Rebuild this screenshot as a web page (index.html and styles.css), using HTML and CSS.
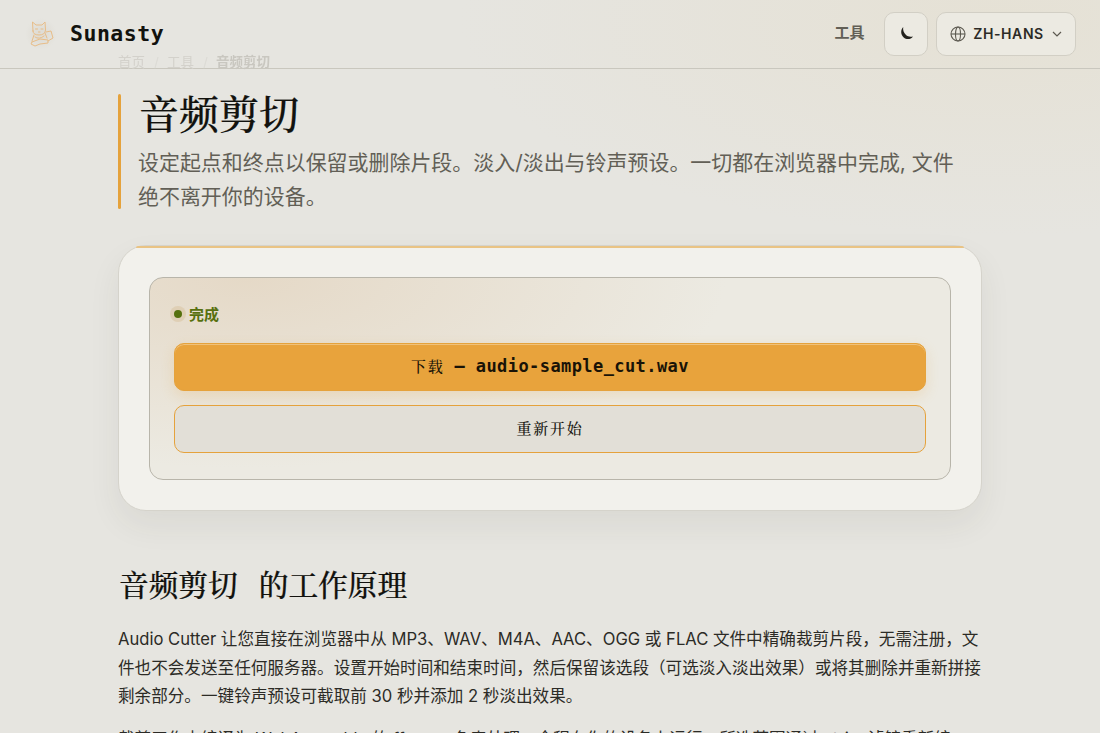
FILE: index.html
```
<!DOCTYPE html>
<html lang="zh-Hans">
<head>
<meta charset="utf-8">
<title>音频剪切 — Sunasty</title>
<link rel="stylesheet" href="styles.css">
</head>
<body>
<header class="site-header">
  <a class="brand">
    <svg class="brand-mark" viewBox="0 0 32 32" width="32" height="32" fill="none" stroke="#e8bd88" stroke-width="1" stroke-linejoin="round" stroke-linecap="round">
      <path d="M8 13 7.500 4 11 7H17L20 4 20.500 12Q20 17 14 17T8 13Z"/>
      <path d="M10.500 11h2M16 11h2M13.500 14h1.500M9 17 7 23M20 15l2 5M10 19q4 3 9-1M21 14l5-1 2 7-5 3M7 24l8-3 8 1v3l-8 1-5 2-4-2 1-2"/>
    </svg>
    <span class="brand-name">Sunasty</span>
  </a>
  <nav class="header-nav">
    <a class="nav-link">工具</a>
    <button class="pill theme" aria-label="主题">
      <svg viewBox="0 0 16 16" width="16" height="16"><path d="M5.200 1C2.400 3.800 2.600 8.800 5.700 11.400C8.600 13.900 12.800 13.400 15 10.400C12.600 11.200 9.800 10.800 7.800 8.800C5.600 6.700 4.800 3.900 5.200 1Z" fill="#22211c"/></svg>
    </button>
    <button class="pill lang">
      <svg viewBox="0 0 16 16" width="16" height="16" fill="none" stroke="#5c5950" stroke-width="1.1"><circle cx="8" cy="8" r="7"/><ellipse cx="8" cy="8" rx="2.500" ry="7"/><path d="M1 8h14"/></svg>
      <span>ZH-HANS</span>
      <svg class="chevron" viewBox="0 0 10 10" width="10" height="10" fill="none" stroke="#5c5950" stroke-width="1.200"><path d="M1 3l4 4 4-4"/></svg>
    </button>
  </nav>
</header>
<main class="page">
  <nav class="crumbs"><span>首页</span><span class="sep">/</span><span>工具</span><span class="sep">/</span><b>音频剪切</b></nav>
  <section class="hero">
    <h1>音频剪切</h1>
    <p>设定起点和终点以保留或删除片段。淡入/淡出与铃声预设。一切都在浏览器中完成, 文件<br>绝不离开你的设备。</p>
  </section>
  <section class="tool-card">
    <div class="result">
      <div class="status"><i class="dot"></i><span>完成</span></div>
      <button class="btn primary"><span class="cjk">下载</span><span class="file">— audio-sample_cut.wav</span></button>
      <button class="btn secondary"><span class="cjk">重新开始</span></button>
    </div>
  </section>
  <section class="article">
    <h2><span>音频剪切</span><span>的工作原理</span></h2>
    <p>Audio Cutter 让您直接在浏览器中从 MP3、WAV、M4A、AAC、OGG 或 FLAC 文件中精确裁剪片段，无需注册，文<br>件也不会发送至任何服务器。设置开始时间和结束时间，然后保留该选段（可选淡入淡出效果）或将其删除并重新拼接<br>剩余部分。一键铃声预设可截取前 30 秒并添加 2 秒淡出效果。</p>
    <p>裁剪工作由编译为 WebAssembly 的 ffmpeg 负责处理，全程在你的设备上运行。所选范围通过 atrim 滤镜重新编</p>
  </section>
</main>
</body>
</html>
```
FILE: styles.css
```
* { box-sizing: border-box; }
html, body { height: 100%; }
body {
  margin: 0;
  overflow: hidden;
  color: #2c2b26;
  font-family: Inter, "Noto Sans CJK SC", sans-serif;
  background:
    radial-gradient(ellipse 600px 240px at 1000px 20px, rgba(229, 224, 210, .8), transparent 90%),
    #e6e5e0;
}
button { font: inherit; color: inherit; padding: 0; }
.site-header {
  height: 69px;
  padding: 0 24px;
  display: flex;
  align-items: center;
  justify-content: space-between;
  border-bottom: 1px solid #c9c7be;
}
.brand { display: flex; align-items: center; gap: 13px; }
.brand-mark { margin-left: 1px; background: radial-gradient(circle, #dfddd6 20%, transparent 70%); }
.brand-name { font: bold 21.500px/1 "DejaVu Sans Mono", monospace; letter-spacing: .5px; color: #12120e; }
.header-nav { display: flex; align-items: center; }
.nav-link { font-size: 15px; line-height: 20px; padding-bottom: 2px; font-weight: 600; color: #625f56; margin-right: 19.500px; }
.pill {
  height: 44px;
  display: flex;
  align-items: center;
  justify-content: center;
  border: 1px solid #d2cfc5;
  border-radius: 10px;
  background: #eceae2;
}
.theme { width: 44px; margin-right: 8px; }
.lang { width: 140px; gap: 7px; font-size: 14px; font-weight: 600; letter-spacing: .6px; color: #2c2b26; }
.lang span { padding-bottom: 1px; }
.chevron { margin-left: 1px; }
.page { width: 864px; margin: 0 auto; }
.crumbs {
  height: 0;
  display: flex;
  gap: 9px;
  font-size: 13.500px;
  line-height: 14px;
  color: #d3d1cb;
  filter: blur(.7px);
}
.crumbs > * { margin-top: -14px; }
.crumbs .sep { width: 4px; opacity: .5; }
.crumbs b { color: #c9c7c0; }
.hero {
  position: relative;
  height: 115px;
  margin-top: 25px;
  padding-left: 20px;
}
.hero::before {
  content: "";
  position: absolute;
  inset: 0 auto 0 0;
  width: 3px;
  border-radius: 2px;
  background: #e5a23c;
}
h1, h2 { margin: 0; font-family: "Noto Serif CJK SC", "Noto Sans CJK SC", serif; font-weight: 500; color: #12120e; -webkit-text-stroke: .2px #12120e; }
h1 { height: 40px; font-size: 40px; line-height: 35px; padding-left: 1px; }
.hero p { margin: 12px 0 0; font-size: 20.960px; line-height: 34px; color: #625f56; white-space: nowrap; }
.tool-card {
  position: relative;
  height: 266px;
  margin-top: 36px;
  padding: 31px 30px;
  border: 1px solid #d5d3cb;
  border-radius: 28px;
  background: #f2f1ec;
  box-shadow: 0 14px 32px rgba(60, 58, 42, .07);
}
.tool-card::before {
  content: "";
  position: absolute;
  inset: 0 17px auto 17px;
  height: 2px;
  border-radius: 4px 4px 0 0;
  background: #e9c384;
}
.result {
  height: 203px;
  padding: 24px;
  border: 1px solid #b8b5aa;
  border-radius: 14px;
  background: radial-gradient(ellipse 480px 190px at 12% 0, #e5d9c7, #eceae2);
}
.status { height: 24px; display: flex; align-items: center; gap: 7px; font-size: 15px; font-weight: 700; color: #57700f; }
.status span { padding-bottom: 2px; }
.dot { width: 8px; height: 8px; border-radius: 50%; background: #55700d; box-shadow: 0 0 0 4px #dfcfb5; }
.btn {
  width: 100%;
  height: 48px;
  display: flex;
  align-items: center;
  justify-content: center;
  border: 1px solid #e5a23c;
  border-radius: 10px;
}
.primary { margin-top: 17px; gap: 10px; background: #e8a33c; color: #191307; box-shadow: inset 0 1px #f0c27b, 0 5px 14px rgba(229, 162, 60, .2); }
.cjk { font: 500 15px/20px "Noto Serif CJK SC", "Noto Sans CJK SC", serif; letter-spacing: 1.700px; padding-bottom: 2px; }
.file { font: bold 17px/1 "DejaVu Sans Mono", monospace; letter-spacing: .42px; padding-bottom: 2px; }
.secondary { margin-top: 14px; background: #e2dfd7; color: #191812; }
.article { margin-top: 54px; }
h2 { display: flex; gap: 21px; font-size: 29.700px; line-height: 36px; padding-left: 1px; }
.article p { margin: 24px 0 0; font-size: 16.600px; line-height: 28.600px; white-space: nowrap; }
.article p + p { margin-top: 14px; }
```
